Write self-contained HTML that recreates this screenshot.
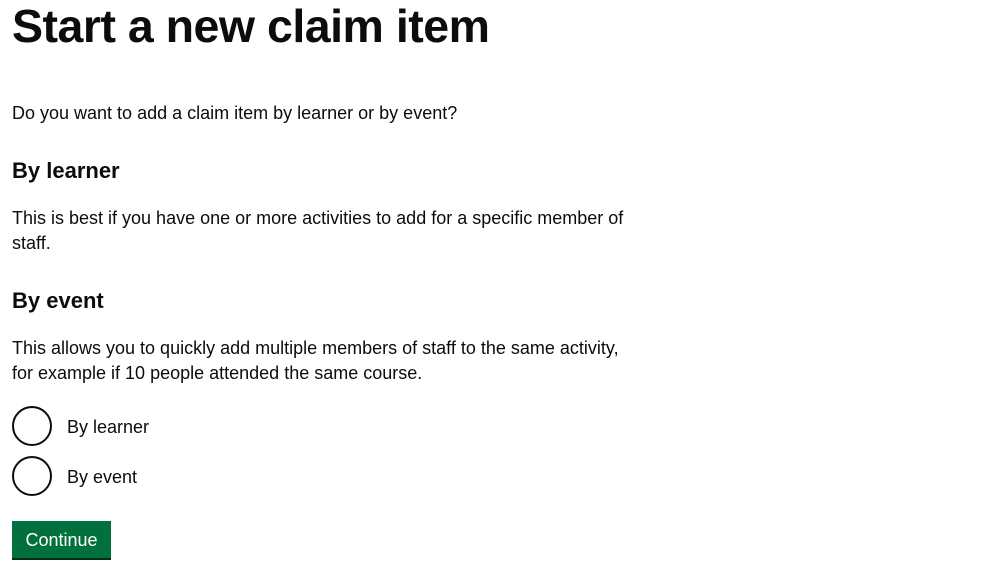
<!DOCTYPE html>
<html><head><meta charset="utf-8"><style>
body{margin:0;background:#fff;color:#0b0c0c;font-family:"Liberation Sans",Arial,sans-serif;width:987px;height:570px;overflow:hidden;position:relative}
.a{position:absolute;left:12px;white-space:nowrap}
h1{margin:0;font-size:46.5px;font-weight:bold;letter-spacing:-0.5px;top:0;line-height:52px}
.p{font-size:18px;line-height:25px}
h2{margin:0;font-size:22px;font-weight:bold;line-height:28px}
.r{position:absolute;left:12px;width:36px;height:36px;border:2px solid #0b0c0c;border-radius:50%}
.l{position:absolute;left:67px;font-size:18px;line-height:24px}
.btn{position:absolute;left:12px;top:521px;width:99px;height:37px;background:#00703c;box-shadow:0 2px 0 #002d18;color:#fff;font-size:18px;line-height:38px;text-align:center}
</style></head><body>
<h1 class="a">Start a new claim item</h1>
<div class="a p" style="top:101px">Do you want to add a claim item by learner or by event?</div>
<h2 class="a" style="top:157px">By learner</h2>
<div class="a p" style="top:206px">This is best if you have one or more activities to add for a specific member of<br>staff.</div>
<h2 class="a" style="top:287px">By event</h2>
<div class="a p" style="top:336px">This allows you to quickly add multiple members of staff to the same activity,<br>for example if 10 people attended the same course.</div>
<div class="r" style="top:406px"></div><div class="l" style="top:415px">By learner</div>
<div class="r" style="top:456px"></div><div class="l" style="top:465px">By event</div>
<div class="btn">Continue</div>
</body></html>
